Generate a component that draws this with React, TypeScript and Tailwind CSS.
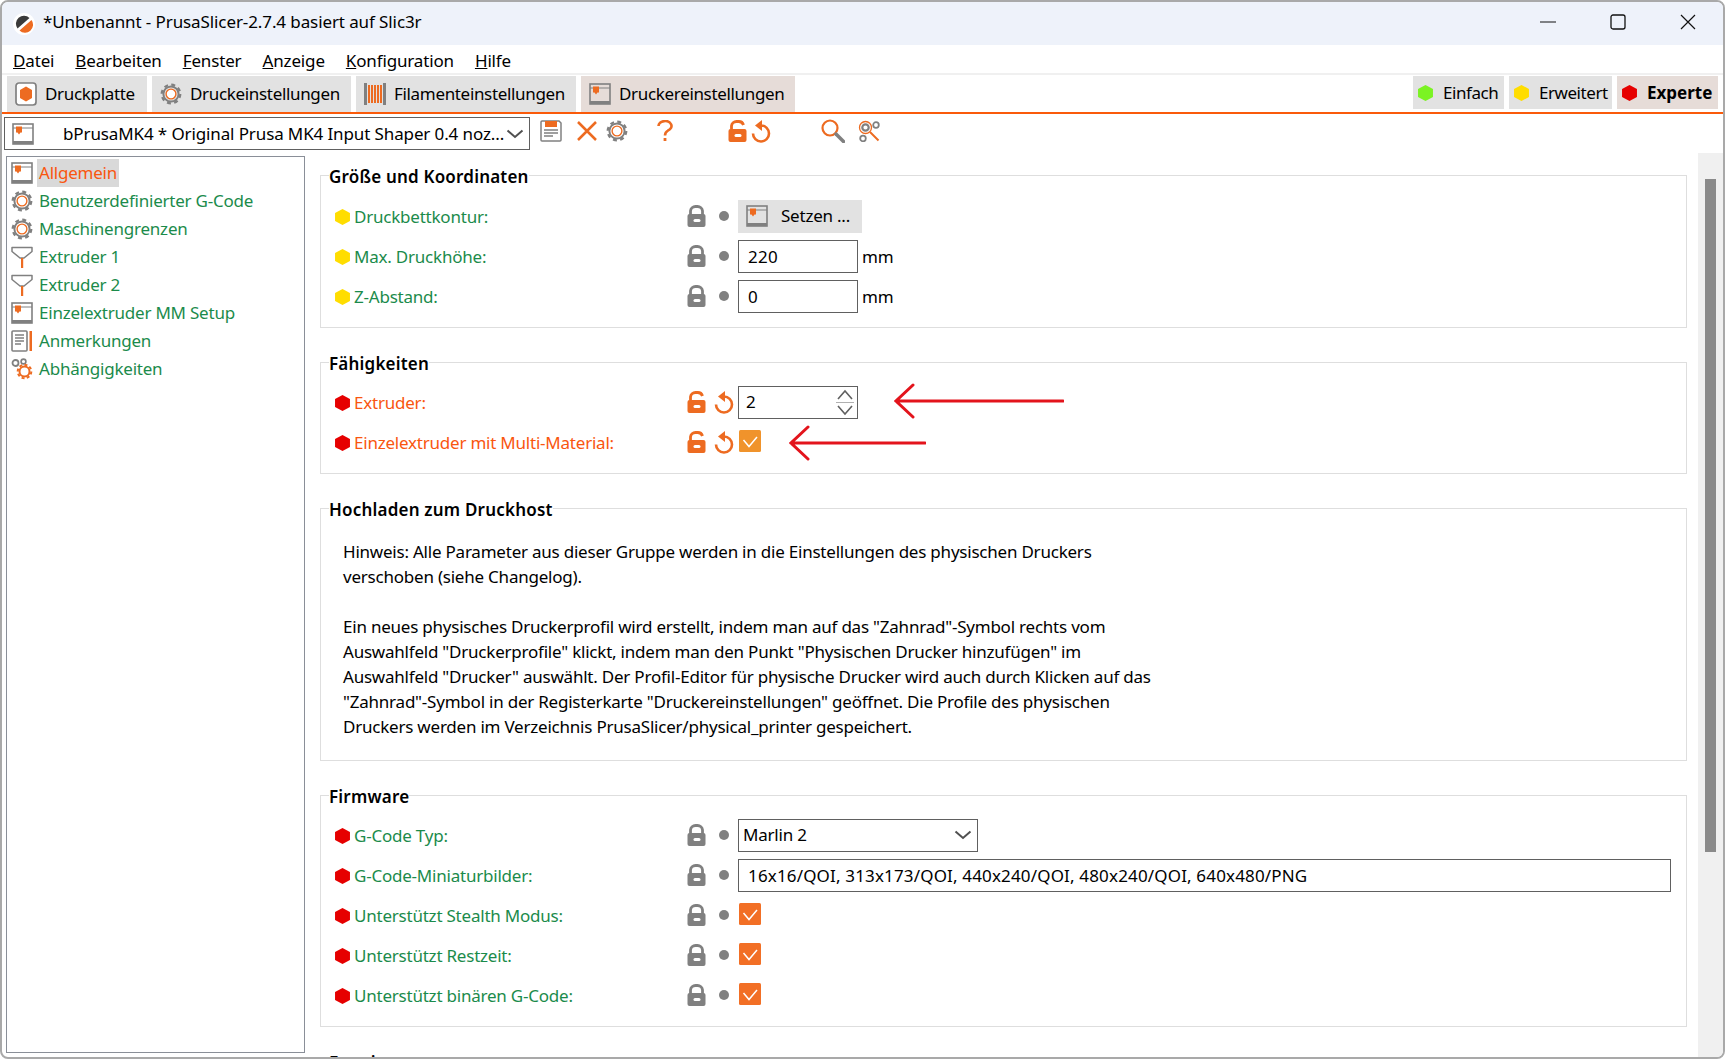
import type { ReactNode } from "react";

const ORANGE = "#ed6b21";
const GRAY = "#808080";

function Hex({ color }: { color: string }) {
  return (
    <svg width="15" height="16" viewBox="0 0 14 15" className="shrink-0">
      <polygon points="7,0 14,3.75 14,11.25 7,15 0,11.25 0,3.75" fill={color} />
    </svg>
  );
}

function PrinterIcon() {
  return (
    <svg width="22" height="22" viewBox="0 0 22 22" className="shrink-0">
      <rect x="1" y="1" width="20" height="20" fill="none" stroke={GRAY} strokeWidth="1.6" />
      <rect x="1" y="18" width="20" height="3" fill={GRAY} />
      <path d="M1 5h20" stroke={GRAY} strokeWidth="1" />
      <path d="M4 3.5h6v6H8.5L7 11.5 5.5 9.5H4z" fill={ORANGE} />
    </svg>
  );
}

function GearIcon() {
  return (
    <svg width="22" height="22" viewBox="0 0 22 22" className="shrink-0">
      <circle cx="11" cy="11" r="9.3" fill="none" stroke={GRAY} strokeWidth="2.2" strokeDasharray="4 3.3" />
      <circle cx="11" cy="11" r="7.6" fill="none" stroke={GRAY} strokeWidth="2" />
      <circle cx="11" cy="11" r="4.9" fill="#fff" stroke={ORANGE} strokeWidth="1.4" />
    </svg>
  );
}

function ExtruderIcon() {
  return (
    <svg width="22" height="22" viewBox="0 0 22 22" className="shrink-0">
      <path d="M1 1.5h20v4L13 12H9L1 5.5z" fill="none" stroke={GRAY} strokeWidth="1.5" strokeLinejoin="round" />
      <rect x="10" y="12" width="2.2" height="10" fill={ORANGE} />
    </svg>
  );
}

function NotesIcon() {
  return (
    <svg width="22" height="22" viewBox="0 0 22 22" className="shrink-0">
      <rect x="1" y="1" width="15" height="20" rx="1" fill="none" stroke={GRAY} strokeWidth="1.6" />
      <path d="M4 5h9M4 8h9M4 11h9M4 14h6" stroke={GRAY} strokeWidth="1.3" />
      <rect x="18.5" y="1" width="2.5" height="20" fill={ORANGE} />
    </svg>
  );
}

function DependencyIcon() {
  return (
    <svg width="22" height="22" viewBox="0 0 22 22" className="shrink-0">
      <circle cx="4.5" cy="5" r="3" fill="none" stroke={GRAY} strokeWidth="1.8" />
      <circle cx="12.5" cy="3.5" r="2.4" fill="none" stroke={GRAY} strokeWidth="1.6" />
      <circle cx="13.5" cy="13.5" r="6.8" fill="none" stroke={ORANGE} strokeWidth="2" strokeDasharray="3 2.3" />
      <circle cx="13.5" cy="13.5" r="5" fill="#fff" stroke={ORANGE} strokeWidth="2" />
    </svg>
  );
}

function PlaterIcon() {
  return (
    <svg width="22" height="24" viewBox="0 0 22 24" className="shrink-0">
      <rect x="1" y="1" width="20" height="22" rx="3" fill="#fff" stroke={GRAY} strokeWidth="1.7" />
      <polygon points="11,4.5 17,8 17,16 11,19.5 5,16 5,8" fill={ORANGE} />
    </svg>
  );
}

function FilamentIcon() {
  return (
    <svg width="22" height="24" viewBox="0 0 22 24" className="shrink-0">
      <rect x="0" y="1" width="3" height="22" fill={GRAY} />
      <rect x="19" y="1" width="3" height="22" fill={GRAY} />
      <path d="M5 3v18M8 3v18M11 3v18M14 3v18M17 3v18" stroke={ORANGE} strokeWidth="2" />
    </svg>
  );
}

function SaveIcon() {
  return (
    <svg width="22" height="22" viewBox="0 0 22 22" className="shrink-0">
      <path d="M1 2a1 1 0 0 1 1-1h17l2 2v17a1 1 0 0 1-1 1H2a1 1 0 0 1-1-1z" fill="#fff" stroke={GRAY} strokeWidth="1.5" />
      <rect x="5" y="1" width="12" height="6" fill={ORANGE} />
      <path d="M4 10h14M4 13h14M4 16h9" stroke={GRAY} strokeWidth="1.3" />
    </svg>
  );
}

function LockIcon({ open }: { open?: boolean }) {
  const color = open ? ORANGE : GRAY;
  return (
    <svg width="19" height="22" viewBox="0 0 19 22" className="shrink-0">
      {open ? (
        <path d="M3.5 9V6a5 5 0 0 1 5-4.5h2a5 5 0 0 1 5 3.5" fill="none" stroke={color} strokeWidth="2.8" />
      ) : (
        <path d="M3.5 10V6a5 5 0 0 1 5-4.5h2a5 5 0 0 1 5 4.5v4" fill="none" stroke={color} strokeWidth="2.8" />
      )}
      <rect x="0.5" y="9" width="18" height="13" rx="2" fill={color} />
      <path d="M8 15.5h4" stroke="#fff" strokeWidth="3" strokeLinecap="round" />
    </svg>
  );
}

function UndoIcon() {
  return (
    <svg width="20" height="23" viewBox="0 0 20 23" className="shrink-0">
      <path d="M8.5 5.5h1.5a8 8 0 1 1-8 8" fill="none" stroke={ORANGE} strokeWidth="2.6" />
      <path d="M11 0v11L4 5.5z" fill={ORANGE} />
    </svg>
  );
}

function Dot() {
  return <span className="w-[10px] h-[10px] rounded-full bg-[#808080]" />;
}

function Check({ color }: { color: string }) {
  return (
    <svg width="22" height="22" viewBox="0 0 22 22" className="shrink-0 ml-[1px] -mt-[4px]">
      <rect width="22" height="22" rx="1.5" fill={color} />
      <path d="M4.5 10l5.5 6.5L18 7" fill="none" stroke="#fff" strokeWidth="1.5" />
    </svg>
  );
}

function Chevron({ className }: { className?: string }) {
  return (
    <svg width="18" height="10" viewBox="0 0 18 10" className={className}>
      <path d="M1.5 1.5L9 8l7.5-6.5" fill="none" stroke="#505050" strokeWidth="2" />
    </svg>
  );
}

function Arrow({ width }: { width: number }) {
  return (
    <svg width={width} height="40" viewBox={`0 0 ${width} 40`} className="shrink-0">
      <path
        d={`M${width - 1} 20H2M19 4L2 20l17 16`}
        fill="none"
        stroke="#e3141c"
        strokeWidth="3"
        strokeLinecap="round"
      />
    </svg>
  );
}

function Group({ title, children, className }: { title: string; children: ReactNode; className?: string }) {
  return (
    <div className={`border border-[#dedede] mb-[34px] ${className ?? "pb-[10px]"}`}>
      <div className="-mt-[11px] ml-[8px] h-[24px] w-fit bg-white text-[17px] leading-[24px] font-semibold tracking-[0.2px] text-black">
        {title}
      </div>
      {children}
    </div>
  );
}

function Row({
  hex,
  label,
  changed,
  children,
}: {
  hex: string;
  label: string;
  changed?: boolean;
  children: ReactNode;
}) {
  return (
    <div className="flex items-center h-[40px] pl-[14px]">
      <Hex color={hex} />
      <span className={`ml-[4px] w-[333px] text-[17px] ${changed ? "text-[#f9560f]" : "text-[#1b8b4b]"}`}>{label}</span>
      <span className="-mt-[2px] flex">
        <LockIcon open={changed} />
      </span>
      <span className="w-[28px] ml-[4px] -mt-[2px] flex justify-center">{changed ? <UndoIcon /> : <Dot />}</span>
      {children}
    </div>
  );
}

function NumField({ value }: { value: string }) {
  return (
    <>
      <div className="w-[120px] h-[33px] -mt-[2px] border border-[#606060] pl-[9px] text-[17px] leading-[31px] tracking-[0.3px] text-black">{value}</div>
      <span className="ml-[4px] text-[17px] text-black">mm</span>
    </>
  );
}

const sidebar = [
  { label: "Allgemein", icon: <PrinterIcon />, active: true },
  { label: "Benutzerdefinierter G-Code", icon: <GearIcon /> },
  { label: "Maschinengrenzen", icon: <GearIcon /> },
  { label: "Extruder 1", icon: <ExtruderIcon /> },
  { label: "Extruder 2", icon: <ExtruderIcon /> },
  { label: "Einzelextruder MM Setup", icon: <PrinterIcon /> },
  { label: "Anmerkungen", icon: <NotesIcon /> },
  { label: "Abhängigkeiten", icon: <DependencyIcon /> },
];

const tabs = [
  { label: "Druckplatte", icon: <PlaterIcon />, w: "w-[140px]" },
  { label: "Druckeinstellungen", icon: <GearIcon />, w: "w-[199px]" },
  { label: "Filamenteinstellungen", icon: <FilamentIcon />, w: "w-[220px]" },
  { label: "Druckereinstellungen", icon: <PrinterIcon />, w: "w-[214px]", active: true },
];

const menus = ["Datei", "Bearbeiten", "Fenster", "Anzeige", "Konfiguration", "Hilfe"];

const note = [
  "Hinweis: Alle Parameter aus dieser Gruppe werden in die Einstellungen des physischen Druckers",
  "verschoben (siehe Changelog).",
  "\u00a0",
  'Ein neues physisches Druckerprofil wird erstellt, indem man auf das "Zahnrad"-Symbol rechts vom',
  'Auswahlfeld "Druckerprofile" klickt, indem man den Punkt "Physischen Drucker hinzufügen" im',
  'Auswahlfeld "Drucker" auswählt. Der Profil-Editor für physische Drucker wird auch durch Klicken auf das',
  '"Zahnrad"-Symbol in der Registerkarte "Druckereinstellungen" geöffnet. Die Profile des physischen',
  "Druckers werden im Verzeichnis PrusaSlicer/physical_printer gespeichert.",
];

export default function App() {
  return (
    <div
      className="w-[1725px] h-[1059px] overflow-hidden flex flex-col bg-white border-2 border-[#a9a9a9] rounded-[8px] text-black tracking-[-0.22px]"
      style={{ fontFamily: '"Noto Sans", sans-serif' }}
    >
      {/* Title bar */}
      <div className="h-[43px] shrink-0 bg-[#eef2fa] flex items-center pl-[11px]">
        <svg width="22" height="22" viewBox="0 0 22 22">
          <circle cx="11" cy="11" r="11" fill="#fff" />
          <path d="M4.5 15.5A8 8 0 0 1 16.5 5z" fill="#3a3a3a" />
          <path d="M6.5 17.5L18.5 7A8 8 0 0 1 6.5 17.5z" fill={ORANGE} />
        </svg>
        <span className="ml-[8px] -mt-[3px] text-[17px] tracking-[-0.1px]">*Unbenannt - PrusaSlicer-2.7.4 basiert auf Slic3r</span>
        <div className="ml-auto flex -mt-[3px]">
          <div className="w-[68px] flex justify-center">
            <svg width="16" height="16" viewBox="0 0 16 16"><path d="M0 8h16" stroke="#111" strokeWidth="1.2" /></svg>
          </div>
          <div className="w-[71px] flex justify-center">
            <svg width="16" height="16" viewBox="0 0 16 16"><rect x="1" y="1" width="14" height="14" rx="2" fill="none" stroke="#111" strokeWidth="1.3" /></svg>
          </div>
          <div className="w-[70px] flex justify-center">
            <svg width="16" height="16" viewBox="0 0 16 16"><path d="M1 1l14 14M15 1L1 15" stroke="#111" strokeWidth="1.2" /></svg>
          </div>
        </div>
      </div>

      {/* Menu */}
      <div className="h-[28px] shrink-0 flex items-center pl-[11px] pt-[4px] gap-[21px] text-[17px] tracking-[-0.15px]">
        {menus.map((m) => (
          <span key={m}>
            <span className="underline">{m[0]}</span>
            {m.slice(1)}
          </span>
        ))}
      </div>

      {/* Tabs */}
      <div className="h-[41px] shrink-0 border-t-2 border-[#f0f0f0]">
        <div className="h-[39px] pt-[1px] flex border-b-2 border-[#fa5a0a] pl-[5px]">
          <div className="flex gap-[5px]">
            {tabs.map((t) => (
              <div
                key={t.label}
                className={`${t.w} h-[36px] pl-[8px] flex items-center gap-[8px] text-[17px] tracking-[-0.33px] ${t.active ? "bg-[#e6dcd8]" : "bg-[#e2e2e2]"}`}
              >
                {t.icon}
                {t.label}
              </div>
            ))}
          </div>
          <div className="ml-auto mr-[5px] flex gap-[5px] text-[17px] h-[33px]">
            <div className="w-[91px] pl-[5px] bg-[#e2e2e2] flex items-center gap-[10px] tracking-[-0.45px]">
              <Hex color="#7bf323" />
              Einfach
            </div>
            <div className="w-[103px] pl-[5px] bg-[#e2e2e2] flex items-center gap-[10px] tracking-[-0.45px]">
              <Hex color="#ffdd00" />
              Erweitert
            </div>
            <div className="w-[101px] pl-[5px] bg-[#e6dcd8] flex items-center gap-[10px] font-bold tracking-normal">
              <Hex color="#e60000" />
              Experte
            </div>
          </div>
        </div>
      </div>

      {/* Toolbar */}
      <div className="h-[39px] shrink-0 flex items-start pt-[3px] pl-[2px]">
        <div className="w-[526px] h-[33px] border border-[#606060] flex items-center pl-[7px] pr-[5px] shrink-0">
          <PrinterIcon />
          <span className="ml-[29px] text-[17px] whitespace-nowrap tracking-[-0.12px]">bPrusaMK4 * Original Prusa MK4 Input Shaper 0.4 noz...</span>
          <Chevron className="ml-auto" />
        </div>
        <div className="flex items-center h-[28px]">
          <span className="ml-[10px]"><SaveIcon /></span>
          <svg width="20" height="20" viewBox="0 0 20 20" className="ml-[15px]">
            <path d="M1 1l18 18M19 1L1 19" stroke={ORANGE} strokeWidth="2.5" />
          </svg>
          <span className="ml-[9px]"><GearIcon /></span>
          <svg width="16" height="22" viewBox="0 0 16 22" className="ml-[29px]">
            <path d="M1.5 6a6.5 5 0 1 1 9.5 4.5C8.5 12 8 13 8 15.5" fill="none" stroke={ORANGE} strokeWidth="2.6" />
            <rect x="6.6" y="18" width="2.8" height="3" fill={ORANGE} />
          </svg>
          <span className="ml-[55px]"><LockIcon open /></span>
          <span className="ml-[4px]"><UndoIcon /></span>
          <svg width="24" height="24" viewBox="0 0 24 24" className="ml-[50px]">
            <circle cx="9" cy="9" r="7.5" fill="none" stroke={ORANGE} strokeWidth="2.2" />
            <path d="M15 15l7.5 7.5" stroke={GRAY} strokeWidth="3.5" strokeLinecap="round" />
          </svg>
          <svg width="22" height="22" viewBox="0 0 22 22" className="ml-[13px]">
            <circle cx="7.5" cy="7.5" r="6" fill="none" stroke={ORANGE} strokeWidth="1.3" />
            <circle cx="7.5" cy="7.5" r="3.2" fill="none" stroke={GRAY} strokeWidth="2.2" />
            <circle cx="18" cy="5" r="2.8" fill="none" stroke={GRAY} strokeWidth="1.8" />
            <circle cx="5" cy="18.5" r="2.8" fill="none" stroke={GRAY} strokeWidth="1.8" />
            <path d="M12 12l8.5 8.5" stroke={ORANGE} strokeWidth="2" />
          </svg>
        </div>
      </div>

      {/* Main */}
      <div className="flex-1 min-h-0 flex">
        {/* Sidebar */}
        <div className="w-[299px] ml-[4px] mt-[3px] mb-[4px] border border-[#8a8f98] pt-[2px] shrink-0">
          {sidebar.map((s) => (
            <div key={s.label} className="h-[28px] flex items-center pl-[4px]">
              {s.icon}
              <span
                className={`ml-[4px] px-[2px] h-[28px] leading-[28px] text-[17px] ${s.active ? "bg-[#d9d9d9] text-[#f9560f]" : "text-[#1b8b4b]"}`}
              >
                {s.label}
              </span>
            </div>
          ))}
        </div>

        {/* Settings */}
        <div className="flex-1 min-w-0 overflow-hidden pl-[15px] pr-[11px] pt-[22px]">
          <Group title="Größe und Koordinaten">
            <div className="mt-[8px]">
              <Row hex="#ffdd00" label="Druckbettkontur:">
                <div className="w-[124px] h-[33px] -mt-[2px] bg-[#e2e2e2] flex items-center pl-[8px] text-[17px]">
                  <PrinterIcon />
                  <span className="ml-[13px]">Setzen ...</span>
                </div>
              </Row>
              <Row hex="#ffdd00" label="Max. Druckhöhe:">
                <NumField value="220" />
              </Row>
              <Row hex="#ffdd00" label="Z-Abstand:">
                <NumField value="0" />
              </Row>
            </div>
          </Group>

          <Group title="Fähigkeiten">
            <div className="mt-[7px]">
              <Row hex="#e60000" label="Extruder:" changed>
                <div className="w-[120px] h-[33px] -mt-[2px] border border-[#606060] pl-[7px] pr-[3px] flex items-center justify-between text-[17px]">
                  2
                  <svg width="18" height="27" viewBox="0 0 18 27">
                    <path d="M2 10l7-8 7 8M2 17l7 8 7-8" fill="none" stroke="#606060" strokeWidth="1.6" />
                    <path d="M0 13.5h18" stroke="#b0b0b0" strokeWidth="1" />
                  </svg>
                </div>
                <span className="ml-[36px] -mt-[5px]"><Arrow width={170} /></span>
              </Row>
              <Row hex="#e60000" label="Einzelextruder mit Multi-Material:" changed>
                <Check color="#f0932b" />
                <span className="ml-[28px]"><Arrow width={137} /></span>
              </Row>
            </div>
          </Group>

          <Group title="Hochladen zum Druckhost" className="pb-[21px]">
            <div className="mt-[17px] pl-[22px] text-[17px] leading-[25px]">
              {note.map((line, i) => (
                <div key={i} className="whitespace-nowrap">{line}</div>
              ))}
            </div>
          </Group>

          <Group title="Firmware">
            <div className="mt-[7px]">
              <Row hex="#e60000" label="G-Code Typ:">
                <div className="w-[240px] h-[33px] -mt-[2px] border border-[#606060] pl-[4px] pr-[5px] flex items-center justify-between text-[17px]">
                  Marlin 2
                  <Chevron />
                </div>
              </Row>
              <Row hex="#e60000" label="G-Code-Miniaturbilder:">
                <div className="w-[933px] h-[33px] -mt-[2px] border border-[#606060] pl-[9px] text-[17px] leading-[31px] tracking-[0.16px]">
                  16x16/QOI, 313x173/QOI, 440x240/QOI, 480x240/QOI, 640x480/PNG
                </div>
              </Row>
              <Row hex="#e60000" label="Unterstützt Stealth Modus:">
                <Check color="#f26f25" />
              </Row>
              <Row hex="#e60000" label="Unterstützt Restzeit:">
                <Check color="#f26f25" />
              </Row>
              <Row hex="#e60000" label="Unterstützt binären G-Code:">
                <Check color="#f26f25" />
              </Row>
            </div>
          </Group>

          <Group title="Erweitert">
            <div className="h-[40px]" />
          </Group>
        </div>

        {/* Scrollbar */}
        <div className="w-[25px] shrink-0 bg-[#f0f0f0] pt-[26px] pl-[7px]">
          <div className="w-[11px] h-[673px] bg-[#8a8a8a]" />
        </div>
      </div>
    </div>
  );
}
